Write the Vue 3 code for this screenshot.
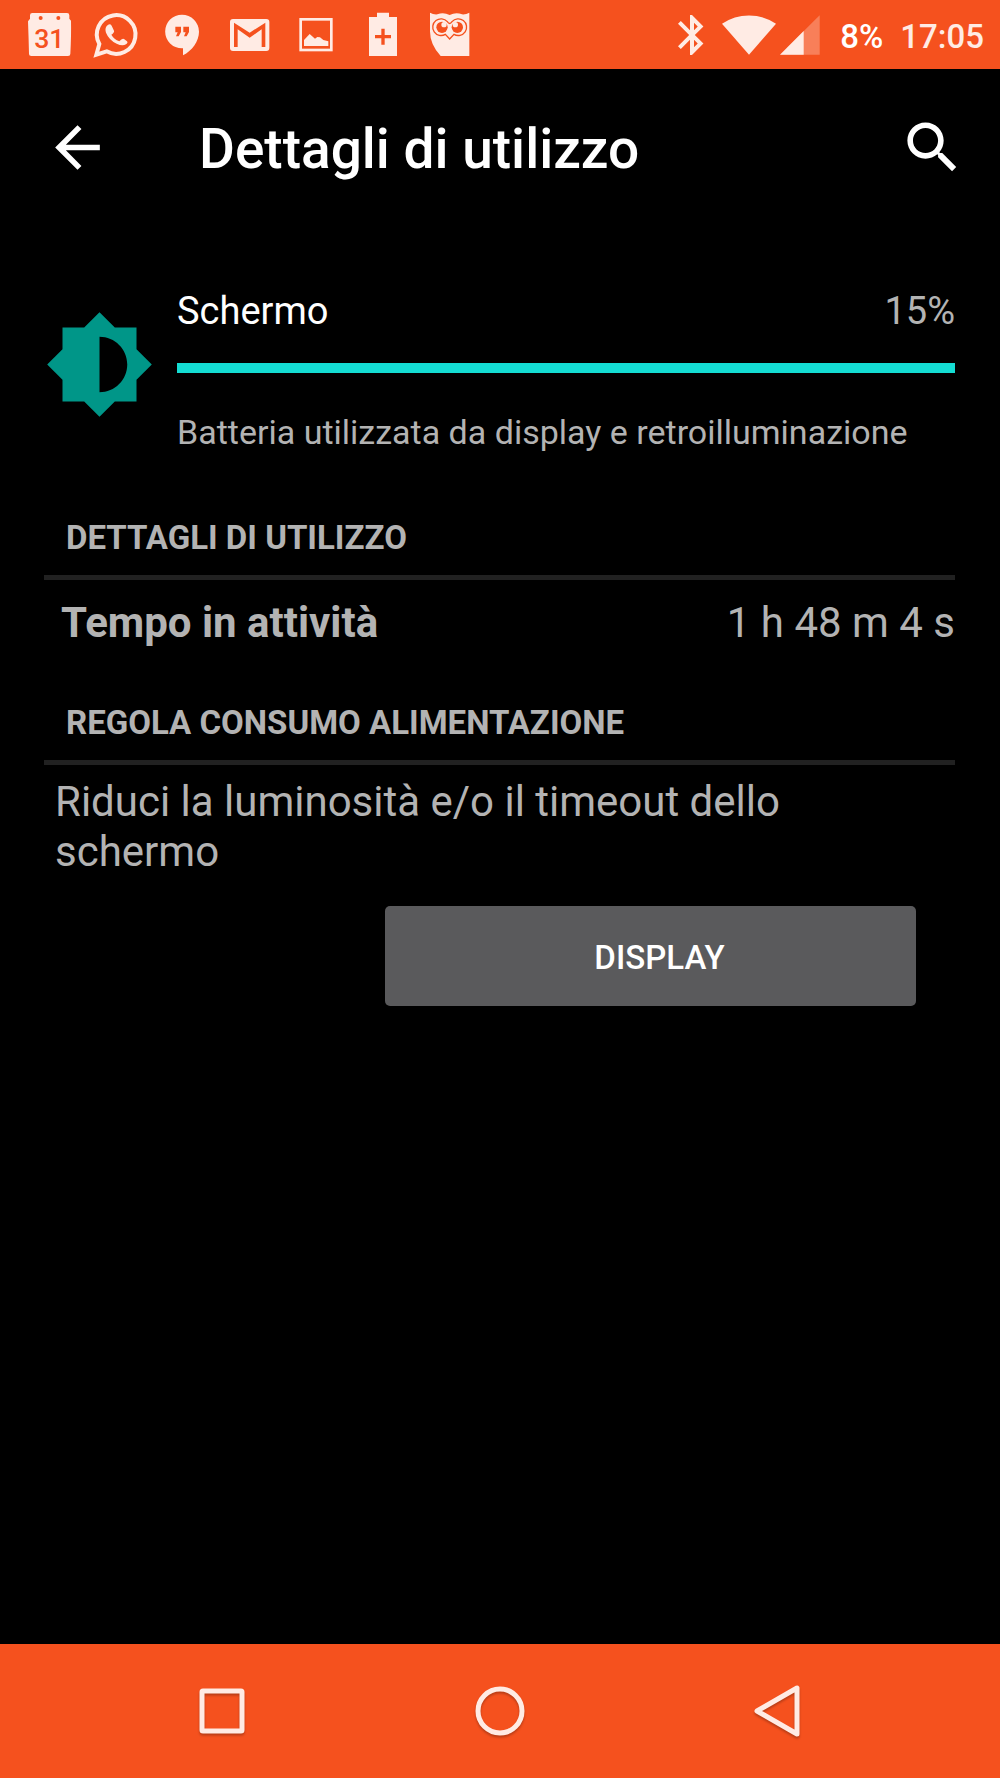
<script setup>
import { ref } from 'vue'

const percent = ref(15)
const barFill = ref(100)
</script>

<template>
  <div class="screen">
    <div class="status-bar">
      <div class="notifications">
        <svg class="note" viewBox="0 0 132 138" role="img" aria-label="Calendar">
          <path fill-rule="evenodd" d="M6 10Q6 3 13 3H117Q124 3 124 10V20L129 26Q130 70 127 126Q127 132 120 132H10Q3 132 3 126Q2 80 0 28L6 20ZM32 18a6 6 0 1 0 12 0a6 6 0 1 0-12 0M85 18a6 6 0 1 0 12 0a6 6 0 1 0-12 0" />
          <text x="64" y="107" text-anchor="middle" class="day">31</text>
        </svg>
        <svg class="note" viewBox="0 0 132 138" role="img" aria-label="WhatsApp">
          <path class="line" stroke-width="12" d="M4 128L13 96A58 58 0 1 1 35 118Z" />
          <path d="M35 42Q44 32 50 41L57 56Q59 61 49 68Q57 82 73 88Q82 77 87 81L96 88Q100 92 93 97Q82 103 65 95Q42 84 33 62Q29 50 35 42Z" />
        </svg>
        <svg class="note" viewBox="0 0 132 138" role="img" aria-label="Hangouts">
          <path d="M60 8A51 51 0 0 1 111 59C111 88 90 116 63 130V109H60A50 50 0 0 1 60 8Z" />
          <path class="cut" d="M40 44H57V60L50 73H42L47 61H40ZM64 44H81V60L74 73H66L71 61H64Z" />
        </svg>
        <svg class="note" viewBox="0 0 132 138" role="img" aria-label="Gmail">
          <rect x="3" y="21" width="118" height="96" rx="9" />
          <path class="cut" d="M15 32L62 62L109 32V105H98V52L62 77L26 52V105H15Z" />
        </svg>
        <svg class="note" viewBox="0 0 132 138" role="img" aria-label="Picture">
          <rect class="line" stroke-width="8" x="14" y="22" width="92" height="92" />
          <path d="M24 102V84L41 66L57 80L64 75L72 76L82 84L97 88V102Z" />
        </svg>
        <svg class="note" viewBox="0 0 132 138" role="img" aria-label="Battery saver">
          <path d="M42 2H78V15H102V132H18V15H42Z" />
          <path class="cut" d="M55 50H65V69H84V79H65V98H55V79H36V69H55Z" />
        </svg>
        <svg class="note" viewBox="0 0 132 138" role="img" aria-label="Hootsuite">
          <path d="M0 2Q10 8 22 7Q40 -1 59 9Q78 -1 96 7Q108 8 118 2V132H32Q0 98 0 58Z" />
          <path class="cut-line" d="M52 29A25 25 0 1 0 46 67L59 81L72 67A25 25 0 1 0 66 29Q59 40 52 29Z" />
          <circle class="cut" cx="36" cy="46" r="17" />
          <circle class="cut" cx="82" cy="46" r="17" />
          <circle cx="42" cy="38" r="8" />
          <circle cx="76" cy="38" r="8" />
        </svg>
      </div>
      <div class="system">
        <svg class="bluetooth" viewBox="5 2 13 20" role="img" aria-label="Bluetooth">
          <path d="M17.71 7.71L12 2h-1v7.59L6.41 5 5 6.41 10.59 12 5 17.59 6.41 19 11 14.41V22h1l5.71-5.71-4.3-4.29 4.3-4.29zM13 5.83l1.88 1.88L13 9.59V5.83zm1.88 10.46L13 18.17v-3.76l1.88 1.88z" />
        </svg>
        <svg class="wifi" viewBox="0 0 162 120" role="img" aria-label="Wi-Fi">
          <path d="M0 26A145 145 0 0 1 162 26L81 119Z" />
        </svg>
        <svg class="signal" viewBox="0 0 120 120" role="img" aria-label="Mobile signal">
          <path opacity="0.3" d="M0 119L119 1V119Z" />
          <path d="M0 119L71 48V119Z" />
        </svg>
        <span class="battery">8%</span>
        <span>17:05</span>
      </div>
    </div>

    <header class="toolbar">
      <button type="button" class="icon-button" aria-label="Indietro">
        <svg viewBox="0 0 24 24"><path d="M20 11H7.83l5.59-5.59L12 4l-8 8 8 8 1.41-1.41L7.83 13H20v-2z" /></svg>
      </button>
      <h1>Dettagli di utilizzo</h1>
      <button type="button" class="icon-button" aria-label="Cerca">
        <svg viewBox="0 0 24 24"><path d="M15.5 14h-.79l-.28-.27C15.41 12.59 16 11.11 16 9.5 16 5.91 13.09 3 9.5 3S3 5.91 3 9.5 5.91 16 9.5 16c1.61 0 3.09-.59 4.23-1.57l.27.28v.79l5 4.99L20.49 19l-4.99-5zm-6 0C7.01 14 5 11.99 5 9.5S7.01 5 9.5 5 14 7.01 14 9.5 11.99 14 9.5 14z" /></svg>
      </button>
    </header>

    <main>
      <section class="summary">
        <svg class="app-icon" viewBox="0 0 24 24" aria-hidden="true">
          <path d="M20 15.31L23.31 12 20 8.69V4h-4.69L12 .69 8.69 4H4v4.69L.69 12 4 15.31V20h4.69L12 23.31 15.31 20H20v-4.69zM12 18V6c3.31 0 6 2.69 6 6s-2.69 6-6 6z" />
        </svg>
        <div class="summary-body">
          <div class="summary-top">
            <span class="name">Schermo</span>
            <span>{{ percent }}%</span>
          </div>
          <div class="bar" role="progressbar" aria-label="Schermo" :aria-valuenow="percent">
            <div class="bar-fill" :style="{ width: barFill + '%' }"></div>
          </div>
          <p class="description">Batteria utilizzata da display e retroilluminazione</p>
        </div>
      </section>

      <section class="usage">
        <h2>DETTAGLI DI UTILIZZO</h2>
        <dl>
          <dt>Tempo in attività</dt>
          <dd>1 h 48 m 4 s</dd>
        </dl>
      </section>

      <section class="adjust">
        <h2>REGOLA CONSUMO ALIMENTAZIONE</h2>
        <p class="advice">Riduci la luminosità e/o il timeout dello schermo</p>
        <div class="actions">
          <button type="button" class="display-button">DISPLAY</button>
        </div>
      </section>
    </main>

    <nav class="nav-bar">
      <button type="button" aria-label="Recenti">
        <svg viewBox="0 0 60 60"><rect x="10" y="10" width="40" height="40" rx="1" /></svg>
      </button>
      <button type="button" aria-label="Home">
        <svg viewBox="0 0 60 60"><circle cx="30" cy="30" r="22" /></svg>
      </button>
      <button type="button" aria-label="Indietro">
        <svg viewBox="0 0 60 60"><path d="M49 7V53L9 30Z" /></svg>
      </button>
    </nav>
  </div>
</template>

<style>
body {
  margin: 0;
  background: #000;
}
</style>

<style scoped>
.screen {
  display: flex;
  flex-direction: column;
  min-height: 100vh;
  background: #000;
  color: #b3b3b3;
  font-family: Roboto, "Noto Sans", sans-serif;
}

button {
  padding: 0;
  border: 0;
  background: none;
  color: inherit;
  font: inherit;
  cursor: pointer;
}

h1,
h2,
p,
dl,
dd {
  margin: 0;
}

svg {
  display: block;
  flex: none;
}

.status-bar {
  display: flex;
  align-items: center;
  justify-content: space-between;
  height: 69px;
  padding: 0 16px 0 28px;
  background: #f5511e;
  color: #ffebe4;
  fill: #ffebe4;
  font-size: 33px;
  font-weight: 500;
}

.notifications {
  display: flex;
  gap: 23px;
}

.note {
  width: 44px;
  height: 46px;
  overflow: visible;
}

.day {
  fill: #f5511e;
  font-size: 80px;
}

.line {
  fill: none;
  stroke: #ffebe4;
}

.cut {
  fill: #f5511e;
}

.cut-line {
  fill: none;
  stroke: #f5511e;
  stroke-width: 4px;
}

.system {
  display: flex;
  align-items: center;
}

.system span {
  padding-top: 3px;
}

.bluetooth {
  width: 26px;
  height: 40px;
  margin-right: 18px;
}

.wifi {
  width: 54px;
  height: 40px;
  margin-right: 4px;
}

.signal {
  width: 40px;
  height: 40px;
  margin-right: 20px;
}

.battery {
  margin-right: 17px;
  color: #fff;
}

.toolbar {
  display: flex;
  align-items: center;
  height: 156px;
  padding: 0 34px 0 44px;
  color: #fff;
}

.toolbar h1 {
  flex: 1;
  margin-left: 88px;
  padding-top: 4px;
  font-size: 55px;
  font-weight: 500;
}

.icon-button svg {
  width: 67px;
  height: 67px;
  fill: #fff;
}

main {
  flex: 1;
  padding: 62px 45px 62px 44px;
}

.summary {
  display: flex;
  align-items: flex-start;
  gap: 22px;
}

.app-icon {
  width: 111px;
  height: 111px;
  margin-top: 22px;
  fill: #009688;
}

.summary-body {
  flex: 1;
}

.summary-top {
  display: flex;
  justify-content: space-between;
  font-size: 38px;
  line-height: 48px;
}

.name {
  color: #fff;
}

.bar {
  height: 10px;
  margin: 28px 0 39px;
  background: #333;
}

.bar-fill {
  height: 100%;
  background: #14ddd3;
}

.description {
  font-size: 34px;
  line-height: 40px;
}

.usage {
  margin-top: 66px;
}

.adjust {
  margin-top: 54px;
}

h2 {
  padding: 0 22px 17px;
  border-bottom: 5px solid #212121;
  font-size: 33px;
  font-weight: 700;
  line-height: 40px;
}

dl {
  display: flex;
  justify-content: space-between;
  padding: 17px 0 0 17px;
  font-size: 42px;
  line-height: 52px;
}

dt {
  font-weight: 700;
}

.advice {
  padding: 12px 11px 0;
  font-size: 42px;
  line-height: 50px;
}

.actions {
  display: flex;
  margin: 29px 39px 0 341px;
}

.display-button {
  flex: 1;
  height: 100px;
  padding: 2px 0 0 18px;
  border-radius: 5px;
  background: #5a5a5c;
  color: #fff;
  font-size: 33px;
  font-weight: 500;
}

.nav-bar {
  display: flex;
  height: 134px;
  padding: 0 83px;
  background: #f5511e;
}

.nav-bar button {
  display: flex;
  flex: 1;
  align-items: center;
  justify-content: center;
}

.nav-bar svg {
  width: 60px;
  height: 60px;
  fill: none;
  stroke: #ffebe4;
  stroke-width: 5px;
  stroke-linejoin: round;
  filter: drop-shadow(0 2px 1px rgba(0, 0, 0, 0.25));
}
</style>
